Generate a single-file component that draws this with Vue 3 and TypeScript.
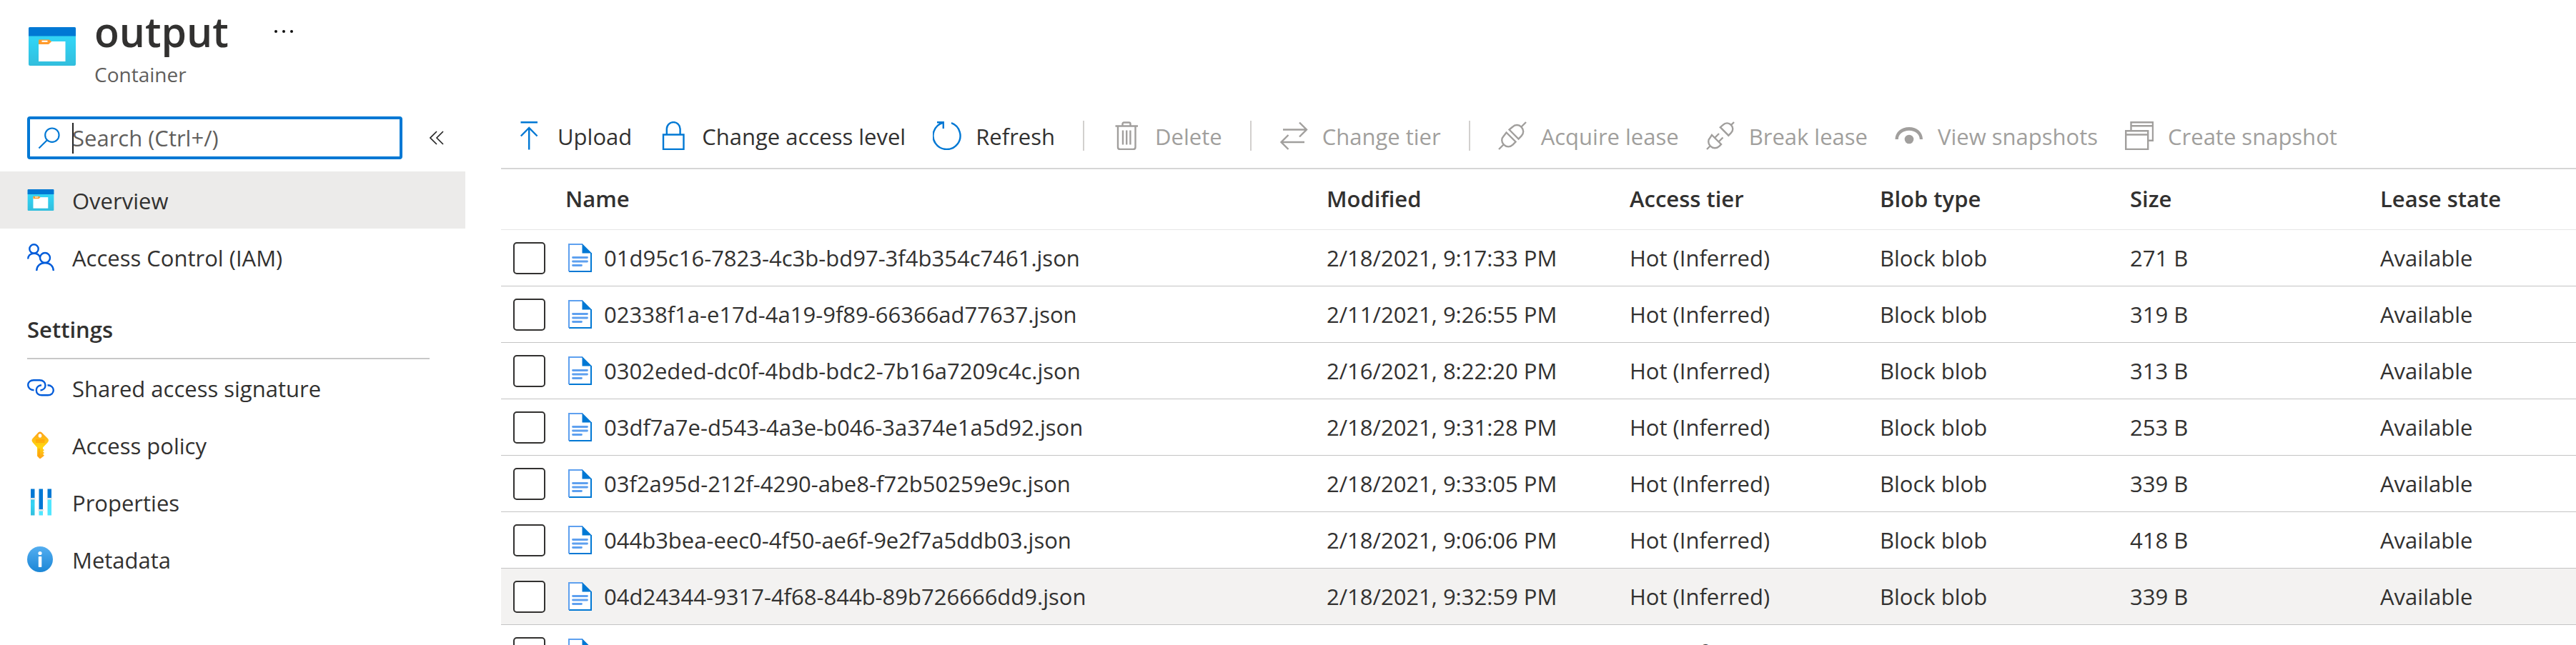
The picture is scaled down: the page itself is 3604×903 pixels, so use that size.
<script setup lang="ts">
interface NavItem { icon: string; label: string; active?: boolean }
interface Command { icon: string; label: string; disabled?: boolean; divider?: boolean }
interface Blob { name: string; modified: string; size: string; hovered?: boolean }

const topNav: NavItem[] = [
  { icon: 'container', label: 'Overview', active: true },
  { icon: 'people', label: 'Access Control (IAM)' },
]
const settingsNav: NavItem[] = [
  { icon: 'link', label: 'Shared access signature' },
  { icon: 'key', label: 'Access policy' },
  { icon: 'sliders', label: 'Properties' },
  { icon: 'info', label: 'Metadata' },
]
const commands: Command[] = [
  { icon: 'upload', label: 'Upload' },
  { icon: 'lock', label: 'Change access level' },
  { icon: 'refresh', label: 'Refresh' },
  { icon: 'trash', label: 'Delete', disabled: true, divider: true },
  { icon: 'swap', label: 'Change tier', disabled: true, divider: true },
  { icon: 'plug', label: 'Acquire lease', disabled: true, divider: true },
  { icon: 'unplug', label: 'Break lease', disabled: true },
  { icon: 'eye', label: 'View snapshots', disabled: true },
  { icon: 'windows', label: 'Create snapshot', disabled: true },
]
const columns: string[] = ['Modified', 'Access tier', 'Blob type', 'Size', 'Lease state']
const blobs: Blob[] = [
  { name: '01d95c16-7823-4c3b-bd97-3f4b354c7461.json', modified: '2/18/2021, 9:17:33 PM', size: '271 B' },
  { name: '02338f1a-e17d-4a19-9f89-66366ad77637.json', modified: '2/11/2021, 9:26:55 PM', size: '319 B' },
  { name: '0302eded-dc0f-4bdb-bdc2-7b16a7209c4c.json', modified: '2/16/2021, 8:22:20 PM', size: '313 B' },
  { name: '03df7a7e-d543-4a3e-b046-3a374e1a5d92.json', modified: '2/18/2021, 9:31:28 PM', size: '253 B' },
  { name: '03f2a95d-212f-4290-abe8-f72b50259e9c.json', modified: '2/18/2021, 9:33:05 PM', size: '339 B' },
  { name: '044b3bea-eec0-4f50-ae6f-9e2f7a5ddb03.json', modified: '2/18/2021, 9:06:06 PM', size: '418 B' },
  { name: '04d24344-9317-4f68-844b-89b726666dd9.json', modified: '2/18/2021, 9:32:59 PM', size: '339 B', hovered: true },
  { name: '0513b2a6-7c21-4e90-9d37-a4b5c1720e6c.json', modified: '2/18/2021, 9:12:41 PM', size: '339 B' },
]
</script>

<template>
  <div class="page">
    <svg class="defs" aria-hidden="true">
      <defs>
        <linearGradient id="cyan" x1="0" y1="0" x2="0" y2="1"><stop offset="0" stop-color="#37c9ea" /><stop offset=".3" stop-color="#32d4f5" /><stop offset="1" stop-color="#32bedd" /></linearGradient>
        <linearGradient id="gold" x1="0" y1="0" x2="0" y2="1"><stop offset="0" stop-color="#fea11b" /><stop offset=".55" stop-color="#ffd70f" /><stop offset="1" stop-color="#fea11b" /></linearGradient>
        <linearGradient id="sky" x1="0" y1="0" x2="0" y2="1"><stop offset="0" stop-color="#54aef0" /><stop offset="1" stop-color="#1b86d6" /></linearGradient>
        <symbol id="i-container" viewBox="0 0 66 54">
          <rect width="66" height="54" rx="2" fill="url(#cyan)" />
          <path d="M2 0h62a2 2 0 0 1 2 2v10.500H0V2a2 2 0 0 1 2-2z" fill="#0078d4" />
          <path d="M14 20h37.500v28H14z" fill="#fff" />
          <path d="M14 18.500a1 1 0 0 1 1-1h14l3 2.800-4 3.700H14z" fill="#ff9a2b" />
          <rect x="18.500" y="18.800" width="8" height="2" fill="#fff" />
        </symbol>
      </defs>
    </svg>

    <header class="head">
      <svg class="head-icon"><use href="#i-container" /></svg>
      <div>
        <div class="title-row">
          <h1>output</h1>
          <button class="more" aria-label="More"><i></i><i></i><i></i></button>
        </div>
        <p>Container</p>
      </div>
    </header>

    <div class="body">
      <aside>
        <div class="search-row">
          <label class="search">
            <svg viewBox="0 0 32 32" aria-hidden="true"><circle cx="20.500" cy="11.500" r="10" /><path d="M13.500 18.500L1.500 30.500" /></svg>
            <span class="caret"></span>
            <input type="text" placeholder="Search (Ctrl+/)" aria-label="Search">
          </label>
          <button class="collapse" aria-label="Collapse"><svg viewBox="0 0 20 20"><path d="M10 1L1 10l9 9M19 1l-9 9 9 9" /></svg></button>
        </div>

        <nav>
          <template v-for="(group, g) in [topNav, settingsNav]" :key="g">
            <h2 v-if="g === 1">Settings</h2>
            <a v-for="item in group" :key="item.label" href="#" :class="{ active: item.active }">
              <svg v-if="item.icon === 'container'" class="small-container"><use href="#i-container" /></svg>
              <svg v-else-if="item.icon === 'people'" viewBox="0 0 38 38" class="line"><circle cx="9.500" cy="7.500" r="6.200" /><circle cx="25" cy="20" r="7" /><path d="M1.200 21.500c0-4.500 3.300-7.800 8.300-7.800 4.200 0 7.200 2 8.400 5.400M13.200 38c0-6.500 4.800-11 11.800-11s11.800 4.500 11.800 11" /></svg>
              <svg v-else-if="item.icon === 'link'" viewBox="0 0 38 38" class="line"><path d="M9.500 22.200C4.500 22.200 1.200 19 1.200 15S4.500 8.200 9 8.200h8.500c5 0 8 3.300 8 7.300 0 3.700-3 6.500-7 7M28.500 15.300c5 0 8.300 3 8.300 7s-3.300 7-7.800 7h-8.500c-5 0-7.700-3-7.700-7 0-3.900 3.100-6.600 7.200-7" /></svg>
              <svg v-else-if="item.icon === 'key'" viewBox="0 0 38 38"><path d="M18 .5c1.200 0 2 .5 3 1.500l7.500 7.500c2 2 2 4 0 6.300L22 22.500v2l2 1.500-2 2 2 2-2 1.800 2 2-5.300 4.200q-.7.600-1.400 0L14 34.500v-12l-6-6.700c-2-2.300-2-4.300 0-6.300L15 2c1-1 1.800-1.500 3-1.500z" fill="url(#gold)" /><ellipse cx="18" cy="6" rx="2.300" ry="2.700" fill="#fff" /><path d="M12 11.500h12.500v1.500H12zM12 14h12.500v1.500H12zM16 24h1.300v11H16z" fill="#ff9300" opacity=".8" /></svg>
              <svg v-else-if="item.icon === 'sliders'" viewBox="0 0 38 38"><path d="M5 .5h5.500v14H5zM16.500 .5h5.500v29h-5.500zM28.500 .5h5.500v14h-5.500z" fill="#0078d4" /><path d="M5 15h5.500v22.500H5z" fill="url(#cyan)" /><path d="M16.500 31h5.500v6.500h-5.500zM28.500 15h5.500v22.500h-5.500z" fill="#50e6ff" /><path d="M4 13h7.500v2.500H4zM15.500 29h7.500v2.500h-7.500zM27.500 13H35v2.500h-7.500z" fill="#e2e6e8" /></svg>
              <svg v-else viewBox="0 0 38 38"><circle cx="18" cy="19" r="18" fill="url(#sky)" /><circle cx="18" cy="10.500" r="2.600" fill="#fff" /><rect x="15.800" y="15" width="4.500" height="15" rx=".8" fill="#fff" /></svg>
              <span>{{ item.label }}</span>
            </a>
          </template>
        </nav>
      </aside>

      <main>
        <div class="toolbar">
          <template v-for="c in commands" :key="c.label">
            <span v-if="c.divider" class="divider"></span>
            <button :disabled="c.disabled">
              <svg viewBox="0 0 40 40" aria-hidden="true">
                <path v-if="c.icon === 'upload'" d="M8.500 1.200h23.500M20.200 39.500V9M8.800 20.500L20.200 9l11.400 11.500" />
                <path v-else-if="c.icon === 'lock'" d="M6 18.500h28.500V39H6zM10.800 18.500V10.500a9.400 9.400 0 0 1 18.800 0v8" />
                <path v-else-if="c.icon === 'refresh'" d="M6 1.200h8.800V10M14.200 1.800A19 19 0 1 0 26 2.200" />
                <path v-else-if="c.icon === 'trash'" d="M4.500 6.500h31.500M14.500 6V3.500q0-2 2-2h7q2 0 2 2V6M8 6.500v29.500q0 3 3 3h18.500q3 0 3-3V6.500M15 12.500v20M20.200 12.500v20M25.400 12.500v20" />
                <path v-else-if="c.icon === 'swap'" d="M5 11.500h33M28 1.500l10 10-10 10M35 29H2.500M12.500 19l-10 10 10 10" />
                <path v-else-if="c.icon === 'plug'" d="M1 39l7-7M39 1l-7 7M11.500 15.500L24.500 28.500l-4 4.200c-3.700 3.600-8.800 3.600-12.500 0s-3.700-8.800 0-12.500zM15.500 11.500l13 13 4-4.200c3.600-3.700 3.600-8.800 0-12.500s-8.800-3.600-12.500 0z" />
                <path v-else-if="c.icon === 'unplug'" d="M1 39l4.500-4.500M39 1l-4 4M8 19L21 32l-2.500 2.600c-3.700 3.600-8.800 3.600-12.500 0s-3.700-8.800 0-12.500zM19.800 8.200l11.500 11.500 3.500-3.500c3.300-3.300 3.300-8 0-11.300s-7.800-3.300-11.200 0zM12.500 22.500l5.500-5.500M18 28l5.500-5.500" />
                <g v-else-if="c.icon === 'eye'" class="filled"><path d="M.5 25C.5 15 9 8 20 8s19 7 19 17h-4.200C34.800 18 28.500 12.800 20 12.800S4.800 18 4.800 25z" /><circle cx="20" cy="25" r="6.300" /></g>
                <path v-else d="M1.200 13.200h31V39H1.200zM1.200 18.500h31M8.500 13V1.200H39v25.500h-6.800M8.500 6.200H39" />
              </svg>
              <span>{{ c.label }}</span>
            </button>
          </template>
        </div>

        <table>
          <colgroup><col class="c-check"><col class="c-name"><col class="c-mod"><col class="c-std"><col class="c-std"><col class="c-std"><col class="c-last"></colgroup>
          <thead>
            <tr><th></th><th>Name</th><th v-for="c in columns" :key="c">{{ c }}</th></tr>
          </thead>
          <tbody>
            <tr v-for="b in blobs" :key="b.name" :class="{ hovered: b.hovered }">
              <td><input type="checkbox" :aria-label="b.name"></td>
              <td>
                <div class="file">
                  <svg viewBox="0 0 33 40" aria-hidden="true"><path d="M1 1h19l12 12v26H1z" fill="#fff" /><path d="M32 13v26H1" fill="none" stroke="#0078d4" stroke-width="2" /><path d="M1 39V1h19" fill="none" stroke="#5ea0ef" stroke-width="2" /><path d="M19.500 0L33 13.500H19.500z" fill="#0078d4" /><path d="M6.500 19.500h20M6.500 25h20M6.500 30.500h12" fill="none" stroke="#5ea0ef" stroke-width="2.800" stroke-linecap="round" /></svg>
                  <span>{{ b.name }}</span>
                </div>
              </td>
              <td class="text">{{ b.modified }}</td>
              <td class="text">Hot (Inferred)</td>
              <td class="text">Block blob</td>
              <td class="text">{{ b.size }}</td>
              <td class="text">Available</td>
            </tr>
          </tbody>
        </table>
      </main>
    </div>
  </div>
</template>

<style>
body { margin: 0; background: #fff; }
</style>

<style scoped>
.page {
  height: 100vh;
  overflow: hidden;
  display: flex;
  flex-direction: column;
  font-family: "Open Sans", "Noto Sans", sans-serif;
  font-size: 31px;
  line-height: 40px;
  color: #323130;
}
.defs { position: absolute; width: 0; height: 0; }
button { border: 0; padding: 0; background: none; font: inherit; color: inherit; }
h1, h2, p { margin: 0; }

.head { display: flex; height: 163px; flex: none; padding-left: 40px; box-sizing: border-box; }
.head-icon { width: 66px; height: 54px; margin: 38px 26px 0 0; }
.title-row { display: flex; align-items: center; gap: 64px; height: 88px; }
h1 { font-size: 57px; line-height: 88px; font-weight: 600; }
.more { display: flex; gap: 7px; }
.more i { width: 4px; height: 4px; border-radius: 50%; background: #111; }
.head p { font-size: 28px; line-height: 32px; color: #605e5c; }

.body { display: flex; flex: 1; min-height: 0; }
aside { width: 651px; flex: none; margin-right: 50px; }
.search-row { display: flex; align-items: center; padding-left: 38px; gap: 38px; }
.search {
  display: flex;
  align-items: center;
  width: 525px;
  height: 60px;
  box-sizing: border-box;
  border: 4px solid #0078d4;
  border-radius: 4px;
  padding-left: 11px;
}
.search svg { width: 31px; height: 31px; fill: none; stroke: #0078d4; stroke-width: 2.2; margin-right: 17px; }
.caret { width: 2px; height: 43px; background: #222; margin-right: -2px; }
.search input { flex: 1; min-width: 0; border: 0; outline: 0; padding: 0; background: none; font: inherit; color: #323130; }
.search input::placeholder { color: #605e5c; opacity: 1; }
.collapse svg { display: block; width: 20px; height: 20px; fill: none; stroke: #222; stroke-width: 1.6; }

nav { padding-top: 17px; }
nav a {
  display: flex;
  align-items: center;
  gap: 25px;
  height: 80px;
  padding-left: 38px;
  color: inherit;
  text-decoration: none;
}
nav a span { padding-top: 2px; }
nav a.active { background: #ecebea; }
nav a svg { width: 38px; height: 38px; flex: none; }
nav a .small-container { height: 30px; }
.line { fill: none; stroke: #015cda; stroke-width: 2.4; }
nav h2 {
  font-size: 31px;
  line-height: 40px;
  font-weight: 600;
  margin: 0 50px 0 38px;
  padding: 41px 0 20px;
  border-bottom: 2px solid #c8c8c8;
}

main { flex: 1; min-width: 0; }
.toolbar { display: flex; align-items: center; height: 54px; padding-bottom: 18px; border-bottom: 2px solid #d6d6d6; }
.toolbar button { display: flex; align-items: center; gap: 20px; padding: 0 19px; height: 54px; white-space: nowrap; }
.toolbar button span { padding-top: 2px; }
.toolbar svg { width: 40px; height: 40px; fill: none; stroke: #0078d4; stroke-width: 2.4; }
.toolbar button:disabled { color: #a19f9d; }
.toolbar button:disabled svg { stroke: #a19f9d; }
.toolbar .filled { fill: #a19f9d; stroke: none; }
.divider { width: 2px; height: 42px; margin: 0 20px; background: #d2d0ce; }

table { width: 100%; table-layout: fixed; border-collapse: separate; border-spacing: 0; }
.c-check { width: 90px; }
.c-mod { width: 424px; }
.c-std { width: 350px; }
.c-last { width: 274px; }
th, td { box-sizing: border-box; padding: 0; text-align: left; white-space: nowrap; height: 79px; border-bottom: 1px solid #c4c4c4; }
th { height: 85px; padding-bottom: 3px; font-weight: 600; border-color: #e6e6e6; }
.hovered td { background: #f3f2f1; }
td input {
  appearance: none;
  display: block;
  width: 45px;
  height: 45px;
  margin: 0 0 0 17px;
  box-sizing: border-box;
  border: 2px solid #323130;
  border-radius: 5px;
  background: #fff;
}
.file { display: flex; align-items: center; gap: 17px; padding-left: 4px; }
.file svg { width: 33px; height: 40px; flex: none; }
</style>
